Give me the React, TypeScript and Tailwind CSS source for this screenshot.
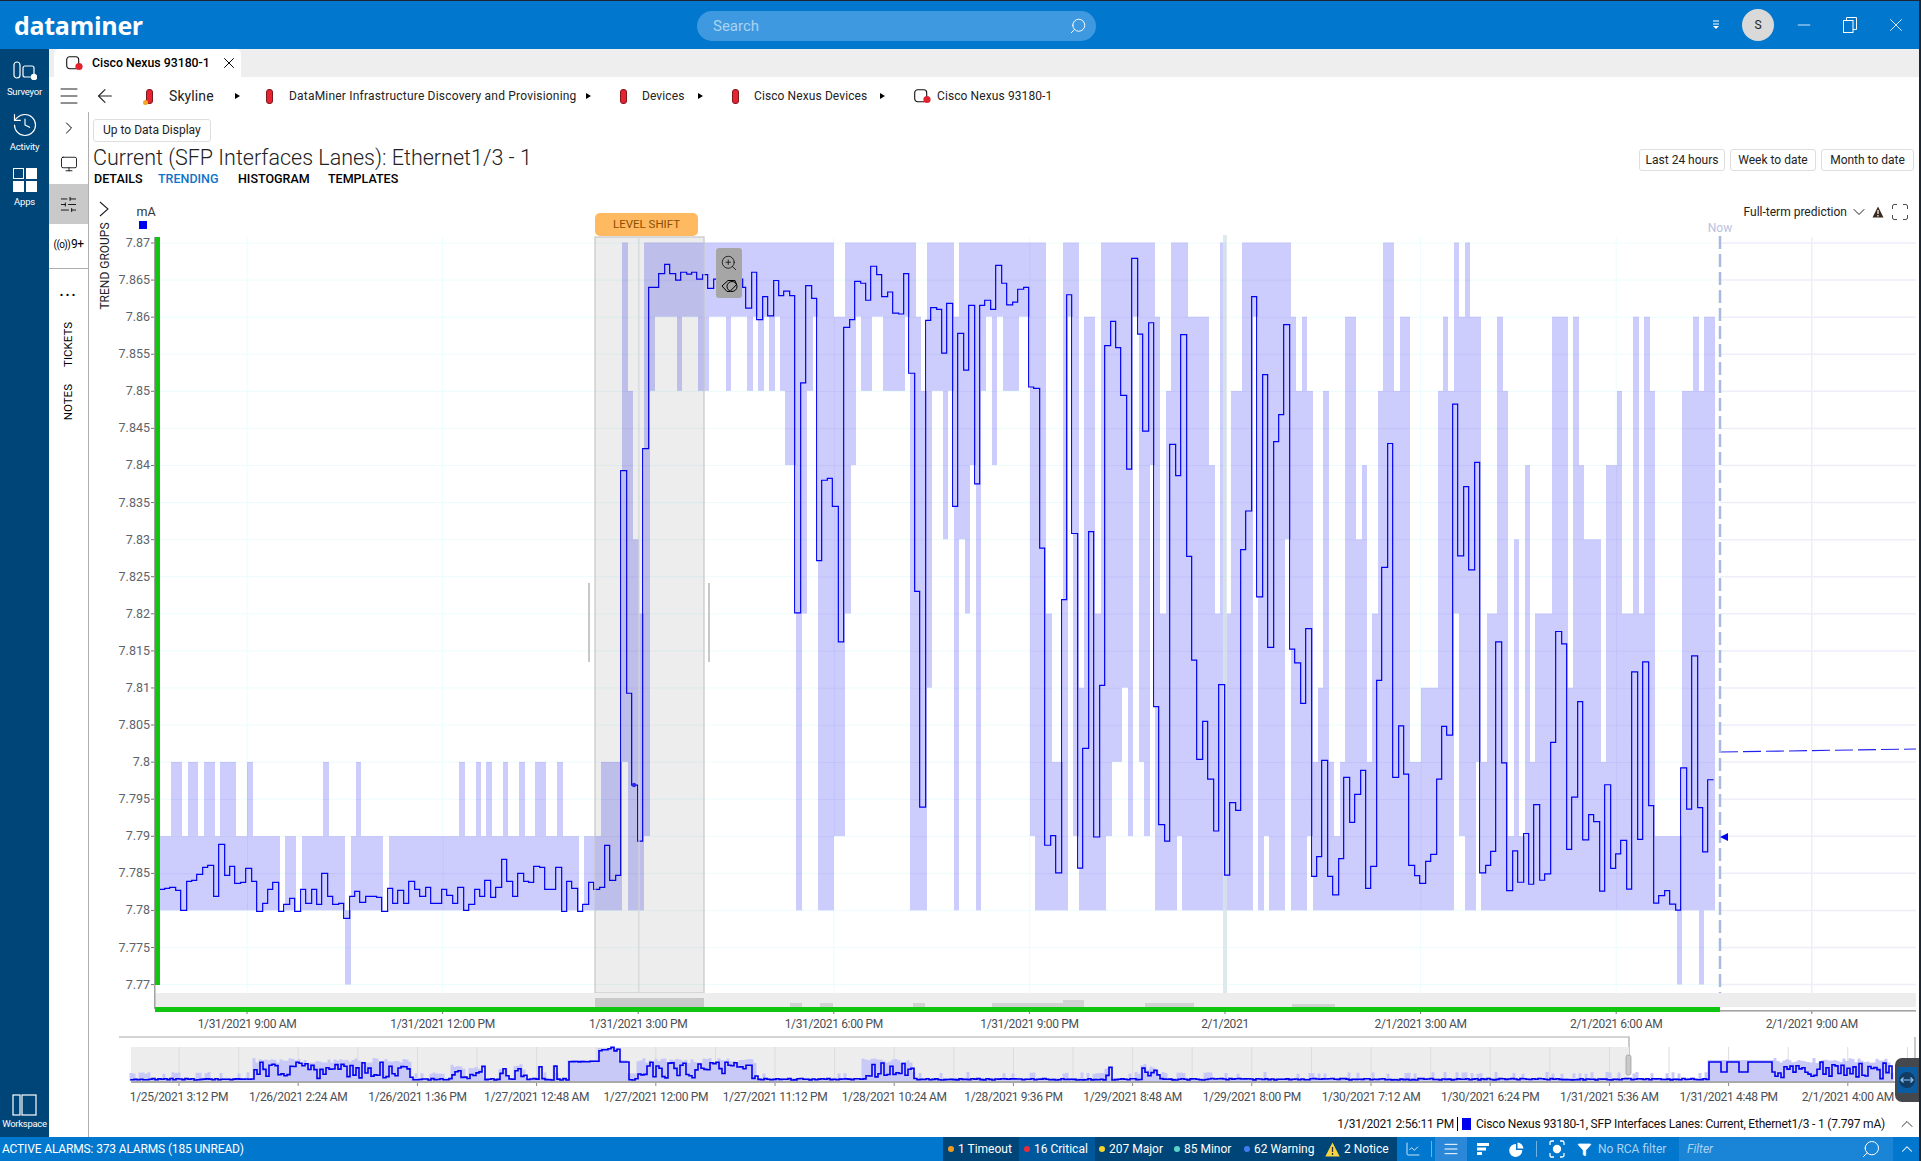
import { ChartLine, ChevronDown, ChevronRight, ChevronUp, AlignJustify, ArrowLeft, Funnel, History, Maximize, Menu, Minus, Monitor, Search, SlidersHorizontal, X, ZoomIn } from "lucide-react"

type Pt = number[]

// trace points as read from crops of the chart, converted to page pixels
const conv = (pts: Pt[], ox: number, oy: number, sx: number, sy: number) =>
  pts.map(([x, y]) => [ox + x / sx, oy + y / sy])

const trace: Pt[] = [
  ...conv(
    [[15,532],[26,508],[44,505],[59,502],[77,511],[92,571],[110,484],[125,481],[140,463],[158,442],[173,436],[191,529],[206,373],[224,466],[239,439],[254,490],[272,487],[287,445],[305,484],[320,574],[338,550],[353,508],[368,487],[386,574],[401,553],[419,535],[434,574],[452,508],[467,550],[485,508],[500,553],[515,460],[533,529],[548,553],[566,550],[581,595],[599,529],[614,514],[629,547],[647,529],[680,532],[695,574],[713,505],[728,550],[743,511],[761,550],[776,484],[794,508],[809,529],[827,502],[842,550],[875,508],[890,526],[908,550],[923,502],[941,571],[956,553],[974,508],[989,529],[1004,481],[1022,532],[1037,502],[1055,418],[1070,484],[1088,529],[1103,460],[1121,484],[1136,487],[1151,439],[1169,442],[1184,508],[1217,442],[1235,574],[1250,484],[1265,505],[1283,574],[1298,553],[1316,487],[1331,508],[1349,502],[1364,376],[1379,481],[1397,466]],
    150, 720, 3, 3,
  ),
  ...conv(
    [[92,524],[110,1009],[125,1209],[143,1331],[158,476],[176,125],[206,95],[224,75],[239,95],[257,109],[272,92],[290,96],[305,92],[320,107],[338,97],[353,127],[371,107],[458,125],[467,170],[485,92],[500,195],[518,145],[533,187],[551,110],[566,143],[581,133],[599,143],[614,834],[632,333],[647,121],[665,149],[680,720],[695,545],[712,541],[727,602],[745,897],[761,212],[779,195],[794,112],[812,116],[827,153],[842,79],[860,97],[875,145],[893,135],[908,181],[926,183],[941,95],[956,312],[974,787],[989,1257],[1007,197],[1022,169],[1040,173],[1055,268],[1070,160],[1088,602],[1103,225],[1121,305],[1136,164],[1154,553],[1169,164],[1184,153],[1202,173],[1217,77],[1235,116],[1250,163],[1268,157],[1283,129],[1301,125],[1316,342],[1331,345],[1349,693],[1364,1340],[1382,1319],[1397,1400],[1415,805]],
    590, 230, 3, 2.178,
  ),
  ...conv(
    [[50,141],[65,661],[83,1390],[98,1129],[116,657],[131,1322],[149,992],[164,252],[182,199],[197,256],[212,360],[230,521],[245,62],[263,227],[278,438],[296,202],[311,1038],[326,1295],[344,1331],[359,467],[377,535],[392,228],[410,711],[425,937],[440,1153],[458,1070],[473,1196],[491,1309],[506,990],[524,1405],[539,1247],[557,1264],[572,696],[587,612],[605,145],[620,799],[638,315],[653,909],[671,461],[686,402],[701,206],[719,913],[734,943],[752,1031],[767,868],[785,1408],[800,1365],[815,1155],[833,1408],[848,1448],[866,1369],[881,1192],[899,1290],[914,1229],[932,1177],[947,1434],[962,1386],[980,981],[995,735],[1013,465],[1028,1192],[1046,1080],[1061,1185],[1076,1384],[1094,1406],[1109,1423],[1127,1375],[1142,1360],[1160,1196],[1175,1081],[1190,1100]],
    1050, 230, 3, 2.178,
  ),
  ...conv(
    [[98,350],[113,655],[131,516],[146,683],[164,467],[179,1292],[197,1277],[212,1249],[227,828],[245,1071],[260,1328],[278,1248],[293,1311],[311,1213],[326,1315],[341,1155],[359,1307],[374,1294],[392,1030],[407,807],[425,832],[440,1245],[455,1140],[473,948],[488,1226],[506,1175],[521,1189],[539,1329],[554,1115],[572,1283],[587,1254],[602,1227],[620,1325],[635,888],[653,1225],[668,868],[686,1157],[701,1353],[716,1338],[734,1328],[749,1355],[767,1367],[782,1081],[800,1164],[815,856],[833,1161],[848,1250],[863,1105],[881,1105]],
    1420, 230, 3, 2.01,
  ),
]

const tracePath = trace.map(([x, y], i) => (i === 0 ? `M${x} ${y}` : `H${x}V${y}`)).join("")

// min/max band columns: x0, x1, top, bottom (87 means 7.87)
const bands: number[][] = [
  [160,280,79,78],[285,296,79,78],[302,345,79,78],[351,383,79,78],[389,579,79,78],[584,601,79,78],[345,351,78,77],
  [171,182,80,79],[188,198,80,79],[204,215,80,79],[220,236,80,79],[247,253,80,79],[323,329,80,79],[356,361,80,79],[459,465,80,79],[476,481,80,79],[486,492,80,79],[503,508,80,79],[519,525,80,79],[535,546,80,79],[557,563,80,79],
  [601,622,80,78],[622,628,87,80],[628,633,85,78],[633,639,83,78],[639,644,82,78],
  [644,650,87,79],[650,655,87,85],[655,677,87,86],[677,682,87,85],[682,698,87,86],[698,709,87,85],[709,726,87,86],[726,731,87,85],[731,747,87,86],[747,753,87,85],[753,758,87,86],[758,764,87,85],[764,769,87,86],[769,775,87,85],[775,780,87,86],[780,785,87,85],[785,796,87,84],[796,802,87,78],[802,807,87,82],[807,813,87,85],[813,818,87,86],[818,834,87,78],[834,845,86,79],[845,851,87,82],[851,856,87,84],[856,861,87,86],[861,872,87,85],[872,883,87,86],[883,905,87,85],[905,910,87,86],[910,916,87,78],[916,921,86,78],[921,927,85,78],[927,932,87,81],[932,943,87,85],[943,948,87,83],[948,954,87,85],[954,959,86,78],[959,965,87,83],[965,970,87,82],[970,976,87,84],[976,981,87,78],[981,986,87,85],[986,992,87,86],[992,997,87,84],[997,1003,87,86],[1003,1019,87,85],[1019,1030,87,86],[1030,1035,87,79],[1035,1046,87,78],[1046,1052,82,78],[1052,1063,80,78],[1063,1068,87,78],
  [1068,1073,87,86],[1073,1079,87,79],[1079,1084,81,78],[1084,1095,86,78],[1095,1101,82,78],[1101,1106,87,78],[1106,1112,87,79],[1112,1122,87,80],[1122,1128,87,81],[1128,1133,87,79],[1133,1139,87,86],[1139,1144,87,80],[1144,1150,87,79],[1150,1155,87,84],[1155,1160,86,78],[1160,1166,82,78],[1166,1171,85,78],[1171,1177,87,78],[1177,1182,87,79],[1182,1188,87,78],[1188,1209,86,78],[1209,1215,84,78],[1215,1220,82,78],[1220,1226,87,78],[1226,1231,82,78],[1231,1242,85,78],[1242,1253,87,78],[1253,1258,87,86],[1258,1264,87,78],[1264,1269,87,79],[1269,1285,87,78],[1285,1291,87,83],[1291,1296,86,78],[1296,1302,85,78],[1302,1307,86,78],[1307,1313,85,79],[1313,1318,80,78],[1318,1323,81,78],[1323,1329,85,78],[1329,1334,80,78],[1334,1340,79,78],[1340,1345,80,78],[1345,1356,86,78],[1356,1362,83,78],[1362,1367,84,78],[1367,1372,80,78],[1372,1378,82,78],[1378,1383,85,78],[1383,1394,87,78],[1394,1400,85,78],[1400,1410,86,78],[1410,1421,80,78],[1421,1438,81,78],[1438,1443,85,78],[1443,1448,86,78],[1448,1454,85,78],
  [1454,1459,87,82],[1459,1465,86,79],[1465,1470,87,78],[1470,1476,86,78],[1476,1481,86,80],[1481,1487,80,78],[1487,1497,82,78],[1497,1503,86,78],[1503,1508,85,78],[1508,1514,79,78],[1514,1519,83,78],[1519,1525,79,78],[1525,1530,84,78],[1530,1535,80,78],[1535,1552,82,78],[1552,1568,86,78],[1568,1573,81,78],[1573,1579,86,78],[1579,1584,84,78],[1584,1601,83,78],[1601,1606,80,78],[1606,1617,84,78],[1617,1622,85,78],[1622,1633,82,78],[1633,1639,86,78],[1639,1644,82,78],[1644,1650,86,78],[1650,1655,85,78],[1655,1682,79,78],[1677,1682,78,77],[1682,1693,85,78],[1693,1699,86,78],[1699,1704,85,78],[1699,1704,78,77],[1704,1715,86,78],
]

const lev = (n: number) => 242.5 + (87 - n) * 74.2

const yTicks = Array.from({ length: 21 }, (_, i) => ({
  y: 243 + i * 37.08,
  label: String(Number((7.87 - i * 0.005).toFixed(3))),
}))

const xTicks = [
  "1/31/2021 9:00 AM", "1/31/2021 12:00 PM", "1/31/2021 3:00 PM", "1/31/2021 6:00 PM", "1/31/2021 9:00 PM",
  "2/1/2021", "2/1/2021 3:00 AM", "2/1/2021 6:00 AM", "2/1/2021 9:00 AM",
].map((label, i) => ({ label, x: 247 + i * 195.6 }))

const miniTicks = [
  "1/25/2021 3:12 PM", "1/26/2021 2:24 AM", "1/26/2021 1:36 PM", "1/27/2021 12:48 AM", "1/27/2021 12:00 PM",
  "1/27/2021 11:12 PM", "1/28/2021 10:24 AM", "1/28/2021 9:36 PM", "1/29/2021 8:48 AM", "1/29/2021 8:00 PM",
  "1/30/2021 7:12 AM", "1/30/2021 6:24 PM", "1/31/2021 5:36 AM", "1/31/2021 4:48 PM", "2/1/2021 4:00 AM",
].map((label, i) => ({ label, x: 179 + i * 119.2 }))

const rnd = (i: number) => {
  const s = Math.sin(i * 12.9898) * 43758.5453
  return s - Math.floor(s)
}

// overview strip: quiet stretches with spikes, plus the busy periods
const active = [[253, 412], [637, 757], [861, 912], [1775, 1890]]
const spikes = [[451, 465], [470, 485], [500, 507], [514, 527], [537, 541], [553, 557], [1106, 1110], [1142, 1160]]

const miniLine = (() => {
  let d = "M131 1079"
  let y = 1079
  for (let x = 131; x < 1895; x += 3) {
    const r = rnd(x)
    if (active.some(([a, b]) => x >= a && x < b)) y = r > 0.45 ? 1062 + rnd(x + 1) * 8 : 1072 + rnd(x + 2) * 7
    else if (spikes.some(([a, b]) => x >= a && x < b)) y = 1066 + r * 12
    else if (x >= 569 && x < 598) y = 1062 - r
    else if (x >= 598 && x < 618) y = 1052 - r * 5
    else if (x >= 618 && x < 628) y = 1062
    else if (x >= 1707 && x < 1775) y = r > 0.85 ? 1072 : 1062
    else y = 1078.5 + r * 1.5
    d += `H${x}V${y.toFixed(1)}`
  }
  return d
})()

const miniBand = (() => {
  let d = ""
  for (let x = 131; x < 1895; x += 3) {
    const r = rnd(x + 7)
    let top = 1078 - (r > 0.7 ? r * 6 : 0)
    if (active.some(([a, b]) => x >= a && x < b)) top = 1058 + r * 5
    else if (spikes.some(([a, b]) => x >= a && x < b)) top = 1064 + r * 6
    else if (x >= 569 && x < 628) top = x > 597 && x < 620 ? 1048 : 1060
    else if (x >= 1707 && x < 1775) top = 1060
    d += `M${x} ${top.toFixed(1)}V1081`
  }
  return d
})()

function Pill() {
  return <span className="block w-[7px] h-[15px] rounded-[3px] bg-[#e8222e] border border-[#7a1a20]" />
}

function Caret() {
  return <span className="block w-0 h-0 border-y-[3.5px] border-y-transparent border-l-[5px] border-l-black" />
}

function NavItem({ icon, label, height, gap }: { icon: React.ReactNode; label: string; height: string; gap: string }) {
  return (
    <div className={`${height} flex flex-col items-center justify-end text-white text-[9.5px] leading-[12px]`}>
      {icon}
      <span className={`${gap} tracking-[-0.2px]`}>{label}</span>
    </div>
  )
}

function Dot({ color, n }: { color: string; n: string }) {
  return (
    <div className="flex items-center gap-[4px]">
      <span className="w-[6px] h-[6px] rounded-full shrink-0" style={{ background: color }} />
      <span>{n}</span>
    </div>
  )
}

export default function App() {
  return (
    <div className="w-[1921px] h-[1161px] flex flex-col overflow-hidden bg-white border-t border-r-2 border-[#1d2630] font-['Roboto',sans-serif] text-black">
      {/* title bar */}
      <div className="h-[48px] shrink-0 flex items-center bg-[#0277ce] text-white">
        <div className="w-[697px] pl-[14px] font-['Open_Sans',sans-serif] font-bold text-[25px] leading-none tracking-[-0.3px]">dataminer</div>
        <div className="w-[399px] h-[30px] mt-[2px] rounded-full bg-[#3f99e0] flex items-center justify-between pl-[16px] pr-[9px] text-[15px] text-[#a9d3f2]">
          <span>Search</span>
          <Search size={18} strokeWidth={1.25} className="-scale-x-100 text-white" />
        </div>
        <div className="flex-1 flex items-center justify-end">
          <svg width="8" height="10" viewBox="0 0 8 10" className="mr-[22px]">
            <path d="M1 1h6M1 4h6" stroke="#fff" />
            <path d="M1 6h6L4 9z" fill="#fff" />
          </svg>
          <div className="w-[32px] h-[32px] mr-[7px] rounded-full bg-[#d9d9d9] text-[#222] text-[12px] flex items-center justify-center">S</div>
          <div className="w-[46px] flex justify-center"><Minus size={20} strokeWidth={1} /></div>
          <div className="w-[46px] flex justify-center">
            <svg width="14" height="16" viewBox="0 0 14 16" fill="none" stroke="#fff">
              <rect x="0.5" y="3.5" width="9.5" height="12" />
              <path d="M3.5 3.5v-3h10v12h-3.5" />
            </svg>
          </div>
          <div className="w-[46px] flex justify-center"><X size={22} strokeWidth={0.9} /></div>
        </div>
      </div>

      <div className="flex flex-1 min-h-0">
        {/* app rail */}
        <div className="w-[49px] shrink-0 bg-[#004578] flex flex-col">
          <NavItem
            height="h-[49px]"
            gap="mt-[6px]"
            label="Surveyor"
            icon={
              <svg width="24" height="20" viewBox="0 0 24 20" fill="none" stroke="#fff" strokeWidth="1.2">
                <rect x="1" y="2" width="6" height="16" rx="3" />
                <rect x="10" y="6" width="11" height="11" rx="2" />
                <circle cx="21" cy="17" r="2.6" fill="#fff" />
              </svg>
            }
          />
          <NavItem height="h-[55px]" gap="mt-[2px]" label="Activity" icon={<History size={28} strokeWidth={1} />} />
          <NavItem
            height="h-[55px]"
            gap="mt-[4px]"
            label="Apps"
            icon={
              <svg width="24" height="24" viewBox="0 0 24 24" fill="#fff">
                <rect x="0.5" y="0.5" width="10" height="10" fill="none" stroke="#fff" />
                <rect x="13" y="0" width="11" height="11" />
                <rect x="0" y="13" width="11" height="11" />
                <rect x="13" y="13" width="11" height="11" />
              </svg>
            }
          />
          <div className="mt-auto h-[56px] mb-[7px] flex flex-col items-center justify-end text-white text-[9.5px] leading-[12px]">
            <svg width="25" height="22" viewBox="0 0 25 22" fill="none" stroke="#fff" strokeWidth="1.2">
              <rect x="1" y="1" width="7" height="20" />
              <rect x="10" y="1" width="14" height="20" />
            </svg>
            <span className="mt-[2px] tracking-[-0.3px]">Workspace</span>
          </div>
        </div>

        <div className="flex-1 min-w-0 flex flex-col">
          {/* open tabs */}
          <div className="h-[28px] shrink-0 bg-[#eeeeee] pl-[5px]">
            <div className="w-[187px] h-full bg-white rounded-t-[5px] flex items-center pl-[12px] text-[12.3px] font-medium">
              <svg width="18" height="15" viewBox="0 0 18 15" fill="none" className="mr-[8px] shrink-0">
                <rect x="0.7" y="0.7" width="12" height="12" rx="3" stroke="#111" strokeWidth="1.1" />
                <circle cx="13" cy="10.5" r="3.6" fill="#e0232e" />
              </svg>
              <span className="whitespace-nowrap">Cisco Nexus 93180-1</span>
              <X size={18} strokeWidth={1.3} className="ml-[10px] shrink-0" />
            </div>
          </div>

          {/* breadcrumb */}
          <div className="h-[35px] shrink-0 pt-[3px] flex items-center text-[12px] tracking-[0.1px] text-[#222] whitespace-nowrap">
            <Menu size={24} strokeWidth={1} className="ml-[8px] shrink-0" />
            <ArrowLeft size={22} strokeWidth={1.2} className="ml-[13px] shrink-0" />
            <span className="relative ml-[30px] flex"><Pill />
              <span className="absolute left-[-3px] bottom-[-1px] w-[5px] h-[5px] rounded-full bg-[#f5a623]" />
            </span>
            <span className="ml-[16px] w-[45px] text-[14px]">Skyline</span>
            <span className="ml-[21px]"><Caret /></span>
            <span className="ml-[26px] flex"><Pill /></span>
            <span className="ml-[16px] w-[284px] tracking-[0.2px]">DataMiner Infrastructure Discovery and Provisioning</span>
            <span className="ml-[13px]"><Caret /></span>
            <span className="ml-[29px] flex"><Pill /></span>
            <span className="ml-[15px] w-[44px]">Devices</span>
            <span className="ml-[12px]"><Caret /></span>
            <span className="ml-[29px] flex"><Pill /></span>
            <span className="ml-[15px] w-[113px]">Cisco Nexus Devices</span>
            <span className="ml-[13px]"><Caret /></span>
            <svg width="18" height="15" viewBox="0 0 18 15" fill="none" className="ml-[29px] shrink-0">
              <rect x="0.7" y="0.7" width="12" height="12" rx="3" stroke="#111" strokeWidth="1.1" />
              <circle cx="13" cy="10.5" r="3.6" fill="#e0232e" />
            </svg>
            <span className="ml-[5px]">Cisco Nexus 93180-1</span>
          </div>

          <div className="flex flex-1 min-h-0">
            {/* side tools */}
            <div className="w-[40px] shrink-0 border-r border-[#aeaeae] flex flex-col items-center">
              <div className="h-[32px] flex items-center"><ChevronRight size={20} strokeWidth={1.2} /></div>
              <div className="h-[40px] flex items-center"><Monitor size={18} strokeWidth={1.1} /></div>
              <div className="h-[40px] w-full bg-[#c9c9c9] flex items-center justify-center"><SlidersHorizontal size={19} strokeWidth={1.1} /></div>
              <div className="h-[40px] w-full flex items-center justify-center text-[12px] tracking-[-0.6px] whitespace-nowrap"><span className="text-[10px] mr-px">((o))</span>9+</div>
              <div className="w-full h-[5px] border-b border-[#aeaeae]" />
              <div className="h-[30px] mt-[9px] flex items-center font-bold tracking-[2px] text-[14px] pb-[4px]">...</div>
              <div className="mt-[14px] [writing-mode:vertical-rl] rotate-180 text-[11.5px]">TICKETS</div>
              <div className="mt-[17px] [writing-mode:vertical-rl] rotate-180 text-[11.5px]">NOTES</div>
            </div>

            <div className="flex-1 min-w-0 flex flex-col">
              {/* heading */}
              <div className="h-[78px] shrink-0 flex justify-between">
                <div className="pl-[4px] pt-[5px]">
                  <button className="h-[23px] px-[9px] rounded-[3px] border border-[#dedede] text-[12px] text-[#222]">Up to Data Display</button>
                  <div className="text-[21.5px] leading-[25px] mt-[3px] font-light text-[#222] whitespace-nowrap">Current (SFP Interfaces Lanes): Ethernet1/3 - 1</div>
                  <div className="flex text-[12.5px] font-medium leading-[17px]">
                    <span className="ml-[1px] w-[64px]">DETAILS</span>
                    <span className="w-[80px] text-[#0f74c9]">TRENDING</span>
                    <span className="w-[90px]">HISTOGRAM</span>
                    <span>TEMPLATES</span>
                  </div>
                </div>
                <div className="pt-[37px] pr-[5px] flex gap-[5px] text-[12px] text-[#222]">
                  <button className="h-[22px] w-[86px] rounded-[3px] border border-[#dedede]">Last 24 hours</button>
                  <button className="h-[22px] w-[86px] rounded-[3px] border border-[#dedede]">Week to date</button>
                  <button className="h-[22px] w-[93px] rounded-[3px] border border-[#dedede]">Month to date</button>
                </div>
              </div>

              {/* chart */}
              <div className="relative h-[920px] shrink-0">
                <svg width="1830" height="920" viewBox="89 190 1830 920" className="block absolute left-0 top-0">
                  <defs>
                    <pattern id="bandFill" patternUnits="userSpaceOnUse" x="247" y="242.5" width="195.6" height="37.1">
                      <rect width="195.6" height="37.1" fill="#cdcdfd" />
                      <rect width="195.6" height="1" fill="#c2c2f9" />
                      <rect width="1" height="37.1" fill="#c2c2f9" />
                    </pattern>
                  </defs>

                  {/* grid */}
                  {yTicks.map((t) => (
                    <g key={t.y}>
                      <line x1="160" x2="1720" y1={t.y} y2={t.y} stroke="#ecfcfc" />
                      <line x1="1720" x2="1916" y1={t.y} y2={t.y} stroke="#eeeefb" strokeWidth="1.5" />
                      <line x1="151" x2="155" y1={t.y} y2={t.y} stroke="#777" />
                      <text x="150" y={t.y + 4} textAnchor="end" fontSize="12.5" fill="#5c636b">{t.label}</text>
                    </g>
                  ))}
                  {xTicks.map((t) => (
                    <g key={t.x}>
                      <line x1={t.x} x2={t.x} y1="237" y2="993" stroke={t.x > 1720 ? "#eeeefb" : "#ecfcfc"} strokeWidth={t.x > 1720 ? 1.5 : 1} />
                      <line x1={t.x} x2={t.x} y1="1010" y2="1014" stroke="#777" />
                      <text x={t.x} y="1028" textAnchor="middle" fontSize="12" letterSpacing="-0.35" fill="#4b4f55">{t.label}</text>
                    </g>
                  ))}

                  {/* min/max band and value trace */}
                  {bands.map(([a, b, top, bot]) => (
                    <rect key={`${a}-${top}`} x={a} width={b - a} y={lev(top)} height={lev(bot) - lev(top)} fill="url(#bandFill)" />
                  ))}
                  <path d="M1225 235V993" stroke="#d8e6ea" strokeWidth="4" opacity="0.8" />
                  <path d={tracePath} fill="none" stroke="#0000f5" strokeWidth="1.2" />
                  <path d="M1720 752L1916 749" stroke="#2222ee" strokeDasharray="18 5" strokeWidth="1.1" />
                  <path d="M1720 236V993" stroke="#a9bade" strokeWidth="2.5" strokeDasharray="13 5" />
                  <path d="M1720 837l8 -4v8z" fill="#0000f0" />

                  {/* selected range */}
                  <rect x="595" y="237" width="109" height="756" fill="#000" fillOpacity="0.07" stroke="#c6c6c6" strokeWidth="1.2" />
                  <path d="M639 237V993" stroke="#d8d8d8" strokeWidth="1.2" />
                  <circle cx="634" cy="785" r="2.2" fill="#2a2aee" />
                  <rect x="708" y="583" width="2" height="79" fill="#c8c8c8" />
                  <rect x="588" y="583" width="2" height="79" fill="#c8c8c8" />

                  {/* axes */}
                  <rect x="155" y="993" width="1761" height="14" fill="#ededed" />
                  <rect x="595" y="998" width="109" height="9" fill="#c9c9c9" />
                  <rect x="790" y="1003" width="12" height="4" fill="#d2d2d2" />
                  <rect x="820" y="1003" width="13" height="4" fill="#d2d2d2" />
                  <rect x="913" y="1003" width="12" height="4" fill="#d2d2d2" />
                  <rect x="992" y="1003" width="71" height="4" fill="#d2d2d2" />
                  <rect x="1063" y="1000" width="21" height="7" fill="#d2d2d2" />
                  <rect x="1145" y="1003" width="49" height="4" fill="#d2d2d2" />
                  <rect x="1292" y="1004" width="43" height="3" fill="#d2d2d2" />
                  <rect x="154" y="237" width="1.5" height="772" fill="#a3a3a3" />
                  <rect x="160" y="1010" width="1756" height="1.6" fill="#a3a3a3" />
                  <rect x="155" y="237" width="5" height="748" fill="#11c611" />
                  <rect x="155" y="1007" width="1565" height="5" fill="#11c611" />

                  <text x="1720" y="232" textAnchor="middle" fontSize="12" fill="#b9c3e0">Now</text>
                  <text x="146" y="216" textAnchor="middle" fontSize="12.5" fill="#333">mA</text>
                  <rect x="139" y="221" width="8" height="8" fill="#0000f0" />
                  <text transform="translate(109 266) rotate(-90)" textAnchor="middle" fontSize="12" fill="#222">TREND GROUPS</text>
                  <path d="M100 202l8 7 -8 7" fill="none" stroke="#222" strokeWidth="1.1" />

                  {/* overview strip */}
                  <path d="M119 1037H1629V1055M1915 1037V1060" fill="none" stroke="#a9a9a9" strokeWidth="1.2" />
                  <rect x="131" y="1047" width="1498" height="35" fill="#ededed" />
                  {miniTicks.map((t) => (
                    <g key={t.x}>
                      <path d={`M${t.x} 1047V1082M${t.x + 59.6} 1047V1082`} stroke="#dcdcdc" />
                      <line x1={t.x} x2={t.x} y1="1082" y2="1086" stroke="#888" />
                      <text x={t.x} y="1101" textAnchor="middle" fontSize="12" letterSpacing="-0.35" fill="#4b4f55">{t.label}</text>
                    </g>
                  ))}
                  <path d={miniBand} stroke="#c9c9f8" strokeWidth="3" fill="none" />
                  <path d={miniLine} stroke="#0000f0" strokeWidth="1.6" fill="none" />
                  <rect x="131" y="1081" width="1785" height="2" fill="#a9a9a9" />
                  <rect x="1626" y="1055" width="5" height="20" rx="2" fill="#c9c9c9" stroke="#9a9a9a" strokeWidth="0.7" />
                </svg>

                <div className="absolute left-[506px] top-[23px] w-[103px] h-[23px] rounded-[5px] bg-[#ffb961] text-[#8a5000] text-[11.5px] flex items-center justify-center">LEVEL SHIFT</div>

                <div className="absolute left-[627px] top-[58px] w-[26px] h-[50px] rounded-[3px] bg-[#a6a6a6] flex flex-col items-center justify-around py-[2px]">
                  <ZoomIn size={18} strokeWidth={1} className="text-black" />
                  <svg width="17" height="14" viewBox="0 0 17 14" fill="none" stroke="#000" strokeWidth="1">
                    <path d="M1 7l6-5.5h7l1.5 4L9 12.5H6z" />
                    <circle cx="11" cy="7.5" r="5" />
                  </svg>
                </div>

                <div className="absolute right-[9px] top-[12px] flex items-center text-[12px] text-[#222]">
                  <span>Full-term prediction</span>
                  <ChevronDown size={20} strokeWidth={1.2} className="ml-[2px]" />
                  <svg width="12" height="12" viewBox="0 0 12 12" className="ml-[3px]">
                    <path d="M6 0.5L11.5 11.5H0.5z" fill="#3a2a1e" />
                    <path d="M6 4v4M6 9v1.4" stroke="#fff" strokeWidth="1.2" />
                  </svg>
                  <Maximize size={20} strokeWidth={1} className="ml-[6px]" />
                </div>

                <div className="absolute right-0 top-[868px] w-[24px] h-[44px] rounded-l-[7px] bg-[#45484c] flex items-center justify-center">
                  <svg width="20" height="26" viewBox="0 0 20 26">
                    <rect width="20" height="26" rx="1" fill="#0b5da3" />
                    <circle cx="10" cy="13" r="8" fill="#133c63" />
                    <path d="M4 13h12M6.500 10.500L4 13l2.500 2.500M13.500 10.500L16 13l-2.500 2.500" stroke="#8fc3ee" strokeWidth="1.2" fill="none" />
                  </svg>
                </div>
              </div>

              {/* hovered value */}
              <div className="flex-1 flex items-center justify-end pr-[2px] text-[12px] tracking-[-0.2px] text-[#111] whitespace-nowrap">
                <span>1/31/2021 2:56:11 PM</span>
                <span className="ml-[3px] h-[14px] border-l border-black" />
                <span className="ml-[4px] w-[9px] h-[12px] bg-[#0000f0]" />
                <span className="ml-[5px]">Cisco Nexus 93180-1, SFP Interfaces Lanes: Current, Ethernet1/3 - 1 (7.797 mA)</span>
                <ChevronUp size={20} strokeWidth={1} className="ml-[12px]" />
              </div>
            </div>
          </div>
        </div>
      </div>

      {/* alarm bar */}
      <div className="h-[24px] shrink-0 bg-[#0277ce] text-white text-[12px] flex items-center whitespace-nowrap">
        <div className="w-[943px] pl-[2px] tracking-[-0.15px]">ACTIVE ALARMS: 373 ALARMS (185 UNREAD)</div>
        <div className="w-[454px] h-full bg-[#004578] flex items-center">
          <div className="w-[76px] h-full pl-[5px] flex items-center"><Dot color="#f39a1e" n="1 Timeout" /></div>
          <div className="w-[76px] h-full pl-[5px] bg-[#00589c] flex items-center"><Dot color="#ea2b3a" n="16 Critical" /></div>
          <div className="w-[76px] pl-[4px]"><Dot color="#f6d32f" n="207 Major" /></div>
          <div className="w-[69px] pl-[3px]"><Dot color="#59d4c8" n="85 Minor" /></div>
          <div className="w-[78px] pl-[4px]"><Dot color="#3f7df0" n="62 Warning" /></div>
          <svg width="15" height="15" viewBox="0 0 15 15" className="shrink-0 ml-[7px]">
            <path d="M7.500 0.500L14.700 14.500H0.300z" fill="#f8d440" />
            <path d="M7.500 5v5M7.500 11v2" stroke="#333" strokeWidth="1.3" />
          </svg>
          <span className="ml-[4px]">2 Notice</span>
        </div>
        <ChartLine size={16} strokeWidth={1.2} className="ml-[8px]" />
        <span className="ml-[10px] h-[16px] border-l border-[#6fb2e6]" />
        <div className="ml-[3px] w-[32px] h-full bg-[#2b88d8] flex items-center justify-center"><AlignJustify size={16} strokeWidth={1.5} /></div>
        <svg width="14" height="12" viewBox="0 0 14 12" fill="#fff" className="ml-[10px]">
          <rect width="12" height="3" /><rect y="4.500" width="9" height="3" /><rect y="9" width="5" height="3" />
        </svg>
        <svg width="15" height="15" viewBox="0 0 15 15" fill="#fff" className="ml-[18px]">
          <path d="M8.500 0.500a6.500 6.500 0 0 1 6 6h-6z" />
          <path d="M7 2a6.500 6.500 0 1 0 6.200 6H7z" />
        </svg>
        <span className="ml-[12px] h-[16px] border-l border-[#6fb2e6]" />
        <svg width="16" height="18" viewBox="0 0 16 18" fill="none" stroke="#fff" strokeWidth="1.3" className="ml-[12px]">
          <path d="M1 5V2.500Q1 1 3 1h2M11 1h2q2 0 2 1.500V5M15 13v2.500q0 1.500-2 1.500h-2M5 17H3q-2 0-2-1.500V13" />
          <circle cx="8" cy="9" r="3.500" fill="#fff" />
        </svg>
        <Funnel size={15} fill="#fff" strokeWidth={1} className="ml-[12px]" />
        <span className="ml-[6px] text-[#a9d3f2] w-[66px]">No RCA filter</span>
        <div className="ml-[15px] w-[214px] h-full bg-[#1a84d6] flex items-center justify-between pl-[8px] pr-[12px] italic text-[#a9d3f2]">
          <span>Filter</span>
          <Search size={20} strokeWidth={1.2} className="-scale-x-100 text-white" />
        </div>
        <ChevronUp size={18} strokeWidth={1.4} className="ml-[5px]" />
      </div>
    </div>
  )
}
